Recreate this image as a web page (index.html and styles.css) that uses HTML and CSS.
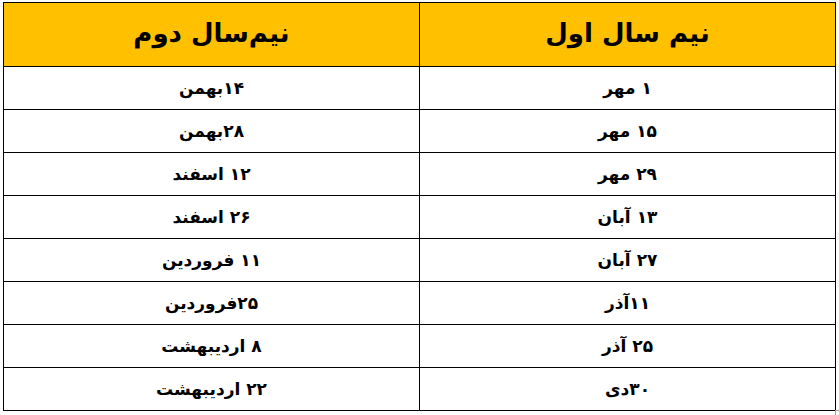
FILE: index.html
```html
<!DOCTYPE html>
<html lang="fa" dir="rtl">
<head>
<meta charset="utf-8">
<title>تقویم نیم‌سال</title>
<link rel="stylesheet" href="styles.css">
</head>
<body>
<div class="page">
  <table class="schedule">
    <thead>
      <tr><th>نیم سال اول</th><th>نیم‌سال دوم</th></tr>
    </thead>
    <tbody>
      <tr><td>۱ مهر</td><td>۱۴بهمن</td></tr>
      <tr><td>۱۵ مهر</td><td>۲۸بهمن</td></tr>
      <tr><td>۲۹ مهر</td><td>۱۲ اسفند</td></tr>
      <tr><td>۱۳ آبان</td><td>۲۶ اسفند</td></tr>
      <tr><td>۲۷ آبان</td><td>۱۱ فروردین</td></tr>
      <tr><td>۱۱آذر</td><td>۲۵فروردین</td></tr>
      <tr><td>۲۵ آذر</td><td>۸ اردیبهشت</td></tr>
      <tr><td>۳۰دی</td><td>۲۲ اردیبهشت</td></tr>
    </tbody>
  </table>
  <span class="end-mark"></span>
</div>
</body>
</html>
```
FILE: styles.css
```css
html, body {
  margin: 0;
  padding: 0;
  background: #ffffff;
}
.page {
  position: relative;
  width: 839px;
  height: 415px;
  padding: 2px 3px 0 3px;
  box-sizing: border-box;
}
.schedule {
  width: 833px;
  border-collapse: collapse;
  table-layout: fixed;
  font-family: "DejaVu Sans", sans-serif;
  font-weight: bold;
  color: #000;
}
.schedule th,
.schedule td {
  border: 1px solid #000;
  text-align: center;
  vertical-align: middle;
  padding: 0;
}
.schedule th {
  background: #ffc000;
  height: 59px;
  padding-bottom: 4px;
  font-size: 26px;
}
.schedule td {
  height: 42px;
  font-size: 17px;
}
.end-mark {
  position: absolute;
  left: 835px;
  top: 410px;
  width: 4px;
  height: 5px;
  border-left: 1px solid #a0a0a0;
  border-top: 1px solid #a0a0a0;
}
```
